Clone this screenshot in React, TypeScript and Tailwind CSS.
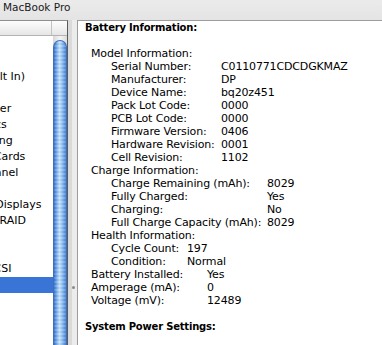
import React from 'react';

const treeItems = [
  'Hardware',
  'ATA',
  'Audio (Built In)',
  'Bluetooth',
  'Card Reader',
  'Diagnostics',
  'Disc Burning',
  'Ethernet Cards',
  'Fibre Channel',
  'FireWire',
  'Graphics/Displays',
  'Hardware RAID',
  'Memory',
  'PCI Cards',
  'Parallel SCSI',
  'Power',
  'Printers',
  'SAS',
  'Serial-ATA',
];

const modelInfo = [
  ['Serial Number:', 'C0110771CDCDGKMAZ'],
  ['Manufacturer:', 'DP'],
  ['Device Name:', 'bq20z451'],
  ['Pack Lot Code:', '0000'],
  ['PCB Lot Code:', '0000'],
  ['Firmware Version:', '0406'],
  ['Hardware Revision:', '0001'],
  ['Cell Revision:', '1102'],
];

const chargeInfo = [
  ['Charge Remaining (mAh):', '8029'],
  ['Fully Charged:', 'Yes'],
  ['Charging:', 'No'],
  ['Full Charge Capacity (mAh):', '8029'],
];

const healthInfo = [
  ['Cycle Count:', '197'],
  ['Condition:', 'Normal'],
];

const batteryInfo = [
  ['Battery Installed:', 'Yes'],
  ['Amperage (mA):', '0'],
  ['Voltage (mV):', '12489'],
];

const Sidebar = () => (
  <div className="w-[68px] shrink-0 flex flex-col border-t border-r border-t-[#8e8e8e] border-r-[#5a5a5a] bg-white">
    {/* column header */}
    <div className="h-[15px] shrink-0 flex border-b border-[#b3b3b3] bg-gradient-to-b from-[#fdfdfd] to-[#e6e6e6]">
      <div className="w-[52px] border-r border-[#c2c2c2]" />
      <div className="flex-1" />
    </div>
    <div className="flex flex-1 min-h-0">
      <div className="w-[53px] overflow-hidden pt-[1px]">
        {treeItems.map((item, i) => (
          <div
            key={item}
            className={`h-[16px] leading-[16px] whitespace-nowrap ${i === 15 ? 'bg-[#3875d7] text-white' : 'text-black'}`}
          >
            <span className="ml-[-57px]">{item}</span>
          </div>
        ))}
      </div>
      {/* aqua scrollbar */}
      <div className="w-[14px] flex flex-col bg-gradient-to-r from-[#d8d8d8] via-[#f4f4f4] to-[#dcdcdc]">
        <div className="h-[4px] shrink-0" />
        <div className="flex-1 rounded-t-[7px] border border-b-0 border-[#3f6fb8] bg-[linear-gradient(to_right,#3b72cc_0%,#76aeeb_22%,#c7e2fb_45%,#a3cdf5_62%,#6aa4e6_84%,#4b82d6_100%)]">
          <div className="h-full w-full rounded-t-[7px] bg-[repeating-linear-gradient(to_bottom,rgba(255,255,255,0.12)_0px,rgba(255,255,255,0.12)_2px,rgba(0,40,120,0.06)_2px,rgba(0,40,120,0.06)_4px)]" />
        </div>
      </div>
    </div>
  </div>
);

const Splitter = () => (
  <div className="w-[9px] shrink-0 flex">
    <div className="w-[4px] bg-[#dadada]" />
    <div className="flex-1 bg-[#ececec] flex flex-col">
      <div className="h-[266px]" />
      <div className="w-[3px] h-[3px] rounded-full bg-[#8a8a8a]" />
    </div>
  </div>
);

const Row = ({ label, value, labelW }: { label: string; value: string; labelW: string }) => (
  <div className="flex whitespace-nowrap">
    <span className={labelW}>{label}</span>
    <span>{value}</span>
  </div>
);

const Detail = () => (
  <div className="flex-1 min-w-0 border-l border-t border-[#9d9d9d] bg-white pl-[7px] leading-[13px] text-[11px] tracking-[-0.15px] text-black overflow-hidden">
    <div className="font-bold text-[10px] tracking-[-0.2px]">Battery Information:</div>
    <div className="h-[13px]" />
    <div className="pl-[6px]">
      <div>Model Information:</div>
      <div className="pl-[20px]">
        {modelInfo.map(([l, v]) => (
          <Row key={l} label={l} value={v} labelW="w-[110px] shrink-0" />
        ))}
      </div>
      <div>Charge Information:</div>
      <div className="pl-[20px]">
        {chargeInfo.map(([l, v]) => (
          <Row key={l} label={l} value={v} labelW="w-[156px] shrink-0" />
        ))}
      </div>
      <div>Health Information:</div>
      <div className="pl-[20px]">
        {healthInfo.map(([l, v]) => (
          <Row key={l} label={l} value={v} labelW="w-[76px] shrink-0" />
        ))}
      </div>
      {batteryInfo.map(([l, v]) => (
        <Row key={l} label={l} value={v} labelW="w-[116px] shrink-0" />
      ))}
    </div>
    <div className="h-[13px]" />
    <div className="font-bold text-[10px] tracking-[-0.2px]">System Power Settings:</div>
  </div>
);

export default function App() {
  return (
    <div className="w-[382px] h-[345px] overflow-hidden bg-[#e8e8e8] font-['DejaVu_Sans',sans-serif] text-[11px] flex flex-col">
      <div className="h-[20px] shrink-0 pl-[3px] text-[10.5px] leading-[15px] text-[#1a1a1a] bg-gradient-to-b from-[#ebebeb] to-[#e4e4e4]">
        MacBook Pro
      </div>
      <div className="flex flex-1 min-h-0">
        <Sidebar />
        <Splitter />
        <Detail />
      </div>
    </div>
  );
}
